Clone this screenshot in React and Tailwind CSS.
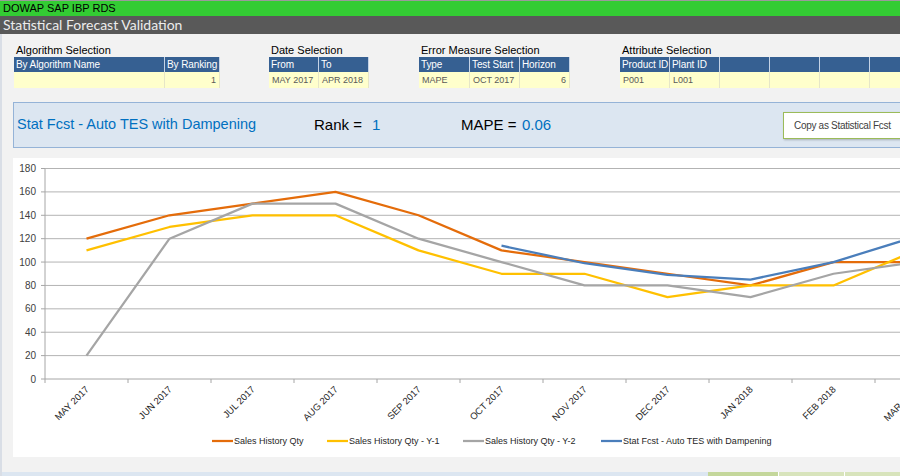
const months = ["MAY 2017", "JUN 2017", "JUL 2017", "AUG 2017", "SEP 2017", "OCT 2017", "NOV 2017", "DEC 2017", "JAN 2018", "FEB 2018", "MAR 2018", "APR 2018"];

const series = [
  { name: "Sales History Qty", color: "#e46c0a", start: 0, data: [120, 140, 150, 160, 140, 110, 100, 90, 80, 100, 100, 100] },
  { name: "Sales History Qty - Y-1", color: "#ffc000", start: 0, data: [110, 130, 140, 140, 110, 90, 90, 70, 80, 80, 110, 110] },
  { name: "Sales History Qty - Y-2", color: "#a5a5a5", start: 0, data: [20, 120, 150, 150, 120, 100, 80, 80, 70, 90, 100, 100] },
  { name: "Stat Fcst - Auto TES with Dampening", color: "#4a7ebb", start: 5, data: [114, 99, 89, 85, 100, 122, 130] },
];

const legendX = [199, 314, 450, 588];

const BASE = 221;
const cx = (i) => 73.5 + 83 * i;
const cy = (v) => BASE - v * 1.1694;

// table block: header cells + one data row
const SelTable = ({ title, cols }) => (
  <div className="flex flex-col shrink-0">
    <div className="h-[13px] leading-[13px] text-[11px] text-black pl-[2px]">{title}</div>
    <div className="flex">
      {cols.map((c, i) => (
        <div key={i} className="flex flex-col shrink-0" style={{ width: c.w }}>
          <div className="h-[15px] leading-[15px] bg-[#366092] text-white text-[10px] tracking-[-0.1px] pl-[2px] border-r border-[#c5d3e6] whitespace-nowrap overflow-hidden">
            {c.head}
          </div>
          <div
            className={
              "h-[16px] leading-[16px] bg-[#ffffcc] text-[#595959] text-[9px] px-[3px] border-r border-[#e6e6c8] whitespace-nowrap overflow-hidden " +
              (c.right ? "text-right" : "")
            }
          >
            {c.val}
          </div>
        </div>
      ))}
    </div>
  </div>
);

const Chart = () => (
  <svg width="900" height="299" className="block" style={{ fontFamily: '"Liberation Sans", Arial, sans-serif' }}>
    {[20, 40, 60, 80, 100, 120, 140, 160, 180].map((v) => (
      <line key={v} x1="32" x2="900" y1={cy(v)} y2={cy(v)} stroke="#b3b3b3" strokeWidth="1" />
    ))}
    {[0, 20, 40, 60, 80, 100, 120, 140, 160, 180].map((v) => (
      <g key={v}>
        <line x1="28" x2="32" y1={cy(v)} y2={cy(v)} stroke="#a6a6a6" />
        <text x="23" y={cy(v) + 3.5} fontSize="10" fill="#404040" textAnchor="end">{v}</text>
      </g>
    ))}
    <line x1="32" x2="32" y1={cy(180)} y2={BASE} stroke="#a6a6a6" />
    <line x1="32" x2="900" y1={BASE} y2={BASE} stroke="#a6a6a6" />
    {Array.from({ length: 12 }).map((_, k) => (
      <line key={k} x1={32 + 83 * k} x2={32 + 83 * k} y1={BASE} y2={BASE + 4} stroke="#a6a6a6" />
    ))}
    {months.map((m, i) => (
      <text
        key={m}
        x={cx(i) + 3}
        y="232"
        fontSize="9.5"
        fill="#262626"
        textAnchor="end"
        transform={`rotate(-45 ${cx(i) + 3} 232)`}
      >
        {m}
      </text>
    ))}
    {series.map((s) => (
      <polyline
        key={s.name}
        fill="none"
        stroke={s.color}
        strokeWidth="2.25"
        strokeLinejoin="round"
        points={s.data.map((v, j) => `${cx(s.start + j)},${cy(v)}`).join(" ")}
      />
    ))}
    {series.map((s, i) => (
      <g key={s.name}>
        <line x1={legendX[i]} x2={legendX[i] + 21} y1="283" y2="283" stroke={s.color} strokeWidth="2.25" />
        <text x={legendX[i] + 22} y="286" fontSize="9" fill="#262626">{s.name}</text>
      </g>
    ))}
  </svg>
);

export default function App() {
  return (
    <div
      className="w-[900px] h-[476px] overflow-hidden bg-[#f2f2f2] flex flex-col"
      style={{ fontFamily: 'Tahoma, "Liberation Sans", Arial, sans-serif' }}
    >
      <div className="h-[16px] shrink-0 bg-[#33cc33] border-t border-[#9a9a9a] text-[11px] leading-[14px] text-black pl-[3px]">
        DOWAP SAP IBP RDS
      </div>
      <div
        className="h-[18px] shrink-0 bg-[#595959] text-[#ececec] text-[14px] leading-[18px] pl-[3px]"
        style={{ fontFamily: 'Lato, "DejaVu Sans", sans-serif' }}
      >
        Statistical Forecast Validation
      </div>

      <div className="flex flex-col flex-1 border-l-2 border-[#d9dee6]">
        <div className="flex pt-[10px] pl-[12px]">
          <SelTable
            title="Algorithm Selection"
            cols={[
              { head: "By Algorithm Name", w: 151, val: "" },
              { head: "By Ranking", w: 55, val: "1", right: true },
            ]}
          />
          <div className="ml-[49px] shrink-0">
            <SelTable
              title="Date Selection"
              cols={[
                { head: "From", w: 50, val: "MAY 2017" },
                { head: "To", w: 50, val: "APR 2018" },
              ]}
            />
          </div>
          <div className="ml-[50px] shrink-0">
            <SelTable
              title="Error Measure Selection"
              cols={[
                { head: "Type", w: 51, val: "MAPE" },
                { head: "Test Start", w: 50, val: "OCT 2017" },
                { head: "Horizon", w: 50, val: "6", right: true },
              ]}
            />
          </div>
          <div className="ml-[50px] shrink-0">
            <SelTable
              title="Attribute Selection"
              cols={[
                { head: "Product ID", w: 50, val: "P001" },
                { head: "Plant ID", w: 50, val: "L001" },
                { head: "", w: 50, val: "" },
                { head: "", w: 50, val: "" },
                { head: "", w: 50, val: "" },
                { head: "", w: 50, val: "" },
              ]}
            />
          </div>
        </div>

        <div className="mt-[14px] ml-[11px] h-[46px] shrink-0 bg-[#dce6f1] border border-r-0 border-[#95b3d7] flex items-center overflow-hidden">
          <span className="w-[300px] shrink-0 pl-[3px] text-[14.5px] text-[#0070c0] whitespace-nowrap">
            Stat Fcst - Auto TES with Dampening
          </span>
          <span className="w-[58px] shrink-0 text-[15px] text-black">Rank =</span>
          <span className="w-[89px] shrink-0 text-[15px] text-[#0070c0]">1</span>
          <span className="w-[61px] shrink-0 text-[15px] text-black">MAPE =</span>
          <span className="w-[261px] shrink-0 text-[15px] text-[#0070c0]">0.06</span>
          <div className="h-[27px] w-[130px] shrink-0 bg-white border border-[#9bbb59] shadow-[1px_1px_2px_rgba(0,0,0,0.25)] flex items-center pl-[10px] text-[10px] tracking-[-0.3px] text-[#404040] whitespace-nowrap">
            Copy as Statistical Fcst
          </div>
        </div>

        <div className="mt-[10px] ml-[11px] h-[299px] shrink-0 bg-white overflow-hidden">
          <Chart />
        </div>

        <div className="flex-1" />
        <div className="h-[4px] shrink-0 flex">
          <div className="w-[706px] bg-[#dce6f1]" />
          <div className="w-[70px] bg-[#c4d79b]" />
          <div className="w-[66px] bg-[#d8e4bc] border-l border-white" />
          <div className="flex-1 bg-[#d8e4bc] border-l border-white" />
        </div>
      </div>
    </div>
  );
}
